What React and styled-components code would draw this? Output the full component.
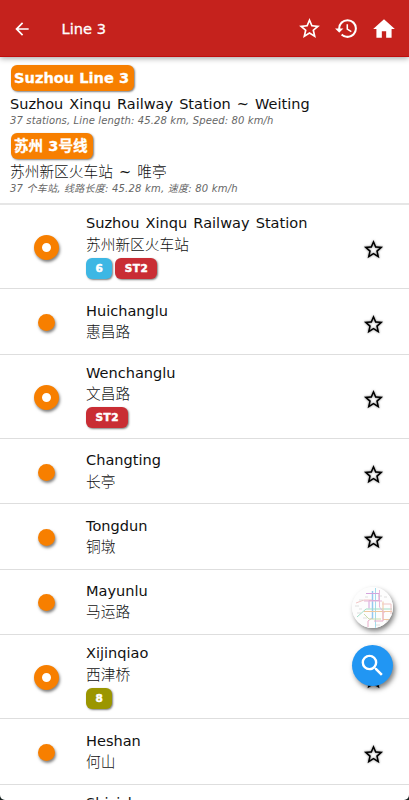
import styled, { createGlobalStyle } from "styled-components"
import { MdArrowBack, MdStarBorder, MdHistory, MdHome, MdSearch } from "react-icons/md"

const GlobalStyle = createGlobalStyle`
  body {
    margin: 0;
    background: #16201f;
    font-family: "DejaVu Sans", "Noto Sans CJK SC", sans-serif;
    color: #111;
  }
`
const Screen = styled.div`
  height: 800px;
  overflow: hidden;
  position: relative;
  background: #fff;
  border-radius: 0 0 5px 5px;
`
const TopBar = styled.header`
  height: 57px;
  display: flex;
  align-items: center;
  box-sizing: border-box;
  padding: 1px 12px 0;
  background: #c5221d;
  border-bottom: 1px solid #c00c0c;
  box-shadow: 0 1px 6px rgba(0, 0, 0, .4);
  color: #fff;
  position: relative;

  svg {
    display: block;
    flex: none;
  }
`
const Title = styled.div`
  flex: 1;
  margin-left: 29.6px;
  font-size: 14.6px;
  -webkit-text-stroke: .3px #fff;
`
const Actions = styled.div`
  display: flex;
  align-items: center;
  gap: 12px;
`
const LineInfo = styled.section`
  height: 148px;
  box-sizing: border-box;
  padding: 8px 10px 0;
  border-bottom: 2px solid #e6e6e6;
`
const LineName = styled.div`
  width: ${props => props.$width}px;
  height: 26px;
  line-height: 26px;
  box-sizing: border-box;
  padding-left: 3px;
  border-radius: 6px;
  background: #f77f00;
  box-shadow: 1px 1px 2px rgba(0, 0, 0, .5);
  color: #fff;
  font-size: 14.6px;
  font-weight: 700;
  -webkit-text-stroke: .3px #fff;
  white-space: nowrap;
  margin-left: 1px;
`
const Route = styled.div`
  height: 21px;
  line-height: ${props => props.$chinese ? 18 : 21}px;
  margin-top: 3px;
  font-size: 14.5px;
  word-spacing: 1.5px;
  white-space: nowrap;
`
const Details = styled.div`
  height: 13px;
  line-height: 12px;
  margin-bottom: 5px;
  color: #666;
  font-size: 10px;
  letter-spacing: ${props => props.$chinese ? .22 : .13}px;
  font-style: italic;
  white-space: nowrap;
`
const Row = styled.div`
  height: ${props => props.$tall ? 84.4 : 65.3}px;
  box-sizing: border-box;
  display: grid;
  grid-template-columns: 86px 1fr 70px;
  align-items: center;
  border-bottom: 1px solid #dedede;
`
const Dot = styled.div`
  width: ${props => props.$transfer ? 25 : 17}px;
  height: ${props => props.$transfer ? 25 : 17}px;
  box-sizing: border-box;
  margin: 2px 0 0 ${props => props.$transfer ? 34.4 : 38.4}px;
  border: ${props => props.$transfer ? "8px solid #f77f00" : "none"};
  border-radius: 50%;
  background: ${props => props.$transfer ? "#fff" : "#f77f00"};
  box-shadow: 1px 2px 3px rgba(0, 0, 0, .5);
`
const Names = styled.div`
  align-self: start;
  padding-top: ${props => props.$tall ? 7.4 : 10.3}px;
  font-size: 14.55px;
  line-height: 21.4px;
  word-spacing: 1.5px;
  white-space: nowrap;
`
const Chinese = styled.span`
  font-weight: 300;
  font-family: "Noto Sans CJK SC", sans-serif;
  font-size: 14.7px;
`
const ChineseName = styled(Chinese)`
  display: block;
  line-height: 19px;
  margin-bottom: 5px;
`
const Badges = styled.div`
  display: flex;
  gap: 3px;
`
const Badge = styled.span`
  height: 21px;
  line-height: 21px;
  padding: 0 9px 0 9.5px;
  border-radius: 6px;
  background: ${props => props.$color};
  box-shadow: 1px 1px 2px rgba(0, 0, 0, .5);
  color: #fff;
  font-size: 10.5px;
  font-weight: 700;
  letter-spacing: .5px;
  -webkit-text-stroke: .5px #fff;
`
const Favorite = styled(MdStarBorder)`
  width: 23px;
  height: 23px;
  margin: 6px 0 0 23.3px;
  color: #000;
  filter: drop-shadow(0 0 1px rgba(0, 0, 0, .5));
`
const FloatingButton = styled.div`
  position: absolute;
  top: ${props => props.$top}px;
  left: 352px;
  width: 41px;
  height: 41px;
  display: flex;
  align-items: center;
  justify-content: center;
  border-radius: 50%;
  overflow: hidden;
  background: ${props => props.$color};
  box-shadow: 2px 3px 5px rgba(0, 0, 0, .5);
  color: #fff;
`

const colors = { 1: "#5cb531", 6: "#3db7e4", ST2: "#c92d34", 8: "#9b9600" }

const stations = [
  { en: "Suzhou Xinqu Railway Station", zh: "苏州新区火车站", lines: ["6", "ST2"] },
  { en: "Huichanglu", zh: "惠昌路" },
  { en: "Wenchanglu", zh: "文昌路", lines: ["ST2"] },
  { en: "Changting", zh: "长亭" },
  { en: "Tongdun", zh: "铜墩" },
  { en: "Mayunlu", zh: "马运路" },
  { en: "Xijinqiao", zh: "西津桥", lines: ["8"] },
  { en: "Heshan", zh: "何山" },
  { en: "Shizishan", zh: "狮子山", lines: ["1"] }
]

function MiniMap() {
  return (
    <svg width="41" height="41" viewBox="0 0 41 41" fill="none" strokeWidth="1">
      <rect width="41" height="41" fill="#fdfdfd" />
      <g opacity=".6">
        <path d="M20.5 4v28" stroke="#52a6e8" strokeWidth="1.5" />
        <path d="M23.5 1v40" stroke="#68c5df" />
        <path d="M14 6.5h13v7H17v8" stroke="#ba6ac7" />
        <path d="M5 30l9-8h26" stroke="#62cba5" />
        <path d="M12 24.5h28M31 14.5v18h7" stroke="#e7a45f" />
        <path d="M4 16l8-3h8M30 17h9v10" stroke="#e9a0a0" />
        <path d="M16 40v-6l4-3M22 34h9v-9" stroke="#dd7aa8" />
        <path d="M27.5 3v17l5 6M12 14h18" stroke="#d989c0" />
        <path d="M12 27l5 5h12" stroke="#a9c975" />
      </g>
      <path d="M3 19h4M7 13h4M5 26h4M11 31h4M13 10h3M34 34h3M24 38h4M26 9h4M7 22h3M32 10h3" stroke="#ccc" strokeWidth=".6" />
    </svg>
  )
}

export default function App() {
  return (
    <>
      <GlobalStyle />
      <Screen>
        <TopBar>
          <MdArrowBack size={20} />
          <Title>Line 3</Title>
          <Actions>
            <MdStarBorder size={25} />
            <MdHistory size={25} />
            <MdHome size={26} />
          </Actions>
        </TopBar>
        <LineInfo>
          <LineName $width={123}>Suzhou Line 3</LineName>
          <Route>Suzhou Xinqu Railway Station ~ Weiting</Route>
          <Details>37 stations, Line length: 45.28 km, Speed: 80 km/h</Details>
          <LineName $width={82}>苏州 3号线</LineName>
          <Route $chinese><Chinese>苏州新区火车站</Chinese> ~ <Chinese>唯亭</Chinese></Route>
          <Details $chinese>37 个车站, 线路长度: 45.28 km, 速度: 80 km/h</Details>
        </LineInfo>
        {stations.map(s => (
          <Row key={s.en} $tall={s.lines}>
            <Dot $transfer={s.lines} />
            <Names $tall={s.lines}>
              <div>{s.en}</div>
              <ChineseName>{s.zh}</ChineseName>
              {s.lines && (
                <Badges>
                  {s.lines.map(l => <Badge key={l} $color={colors[l]}>{l}</Badge>)}
                </Badges>
              )}
            </Names>
            <Favorite />
          </Row>
        ))}
        <FloatingButton $top={587} $color="#fff"><MiniMap /></FloatingButton>
        <FloatingButton $top={644.5} $color="#2196f3"><MdSearch size={29} /></FloatingButton>
      </Screen>
    </>
  )
}
